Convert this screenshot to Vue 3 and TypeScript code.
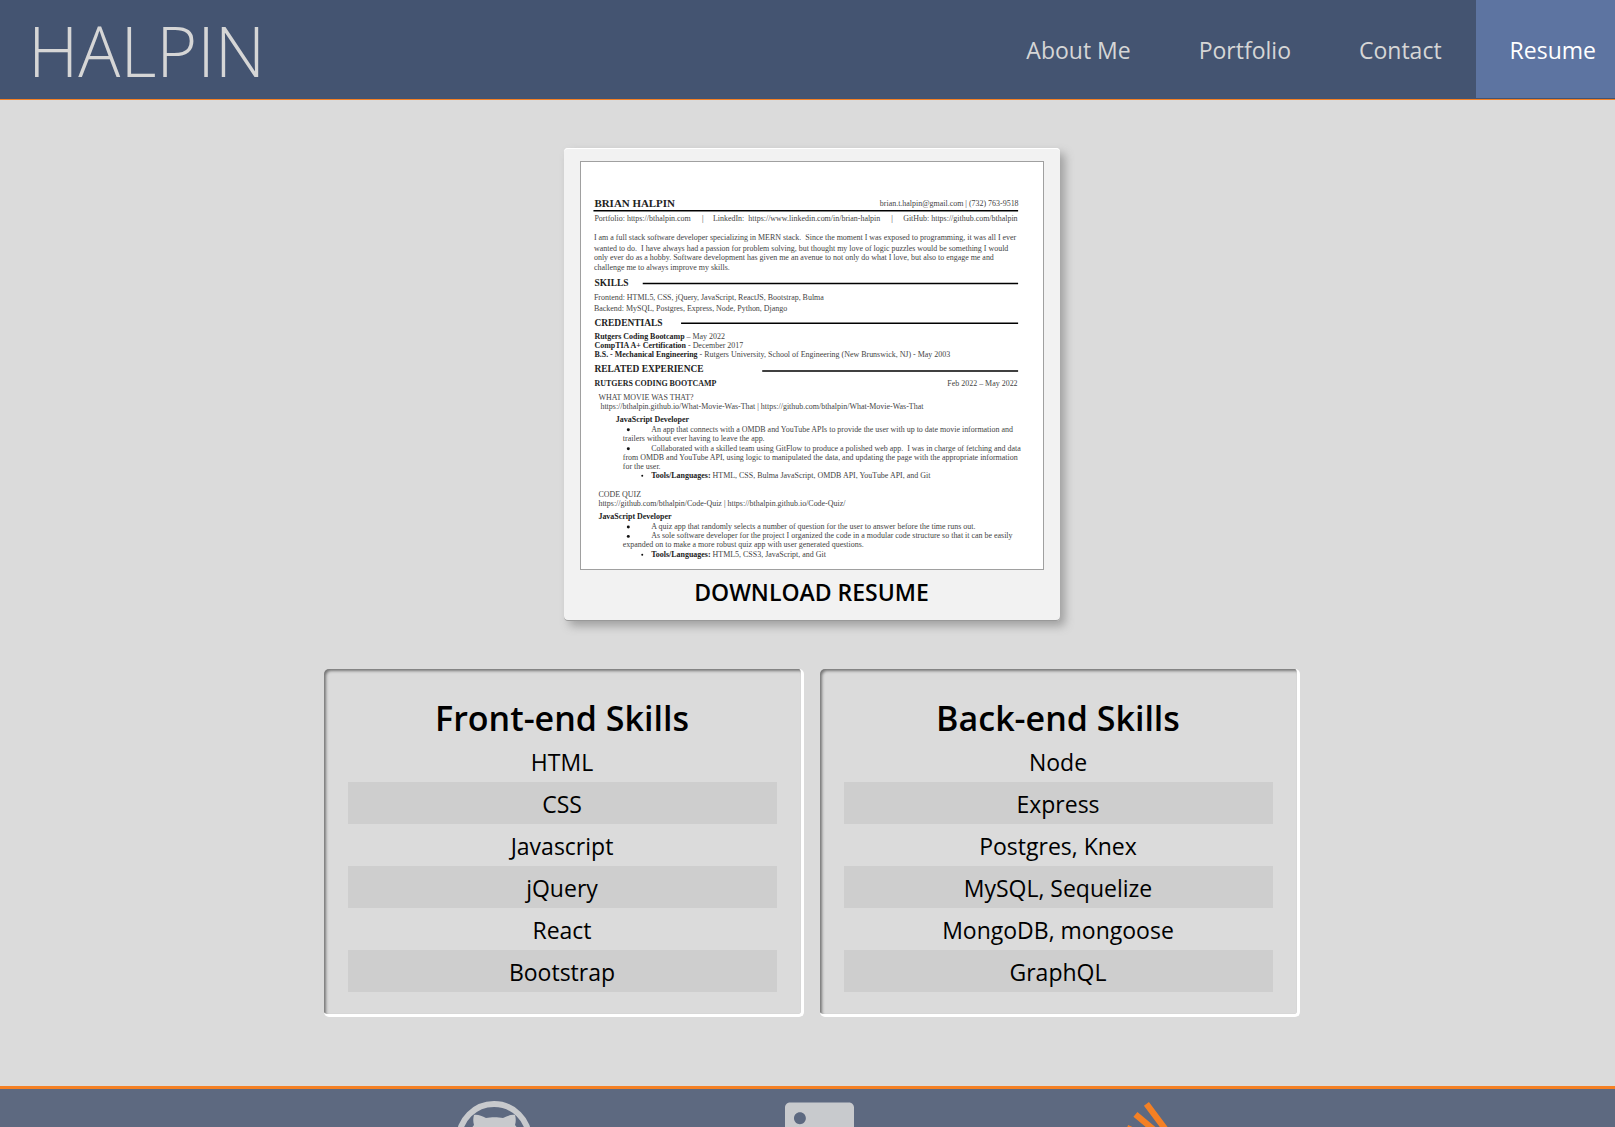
<script setup lang="ts">
interface NavItem {
  label: string
  active?: boolean
}
interface SkillGroup {
  title: string
  skills: string[]
}
interface DocLine {
  x: number
  y: number
  text: string
  lead?: string
  size?: number
  bold?: boolean
  end?: boolean
}

const nav: NavItem[] = [
  { label: 'About Me' },
  { label: 'Portfolio' },
  { label: 'Contact' },
  { label: 'Resume', active: true },
]

const groups: SkillGroup[] = [
  { title: 'Front-end Skills', skills: ['HTML', 'CSS', 'Javascript', 'jQuery', 'React', 'Bootstrap'] },
  {
    title: 'Back-end Skills',
    skills: ['Node', 'Express', 'Postgres, Knex', 'MySQL, Sequelize', 'MongoDB, mongoose', 'GraphQL'],
  },
]

// Text of the resume preview, in the units of its 928 x 818 view box
const lines: DocLine[] = [
  { x: 29, y: 91, text: 'BRIAN HALPIN', size: 22, bold: true },
  { x: 881, y: 90, text: 'brian.t.halpin@gmail.com | (732) 763-9518', end: true },
  { x: 29, y: 119, text: 'Portfolio: https://bthalpin.com' },
  { x: 245, y: 119, text: '|' },
  { x: 267, y: 119, text: 'LinkedIn:  https://www.linkedin.com/in/brian-halpin' },
  { x: 625, y: 119, text: '|' },
  { x: 879, y: 119, text: 'GitHub: https://github.com/bthalpin', end: true },
  { x: 28, y: 158, text: 'I am a full stack software developer specializing in MERN stack.  Since the moment I was exposed to programming, it was all I ever' },
  { x: 28, y: 179, text: 'wanted to do.  I have always had a passion for problem solving, but thought my love of logic puzzles would be something I would' },
  { x: 28, y: 198, text: 'only ever do as a hobby. Software development has given me an avenue to not only do what I love, but also to engage me and' },
  { x: 28, y: 218, text: 'challenge me to always improve my skills.' },
  { x: 29, y: 250, text: 'SKILLS', size: 19, bold: true },
  { x: 28, y: 279, text: 'Frontend: HTML5, CSS, jQuery, JavaScript, ReactJS, Bootstrap, Bulma' },
  { x: 28, y: 300, text: 'Backend: MySQL, Postgres, Express, Node, Python, Django' },
  { x: 29, y: 331, text: 'CREDENTIALS', size: 19, bold: true },
  { x: 29, y: 357, lead: 'Rutgers Coding Bootcamp', text: ' – May 2022' },
  { x: 29, y: 375, lead: 'CompTIA A+ Certification', text: ' - December 2017' },
  { x: 29, y: 393, lead: 'B.S. - Mechanical Engineering', text: ' - Rutgers University, School of Engineering (New Brunswick, NJ) - May 2003' },
  { x: 29, y: 423, text: 'RELATED EXPERIENCE', size: 19, bold: true },
  { x: 29, y: 451, text: 'RUTGERS CODING BOOTCAMP', bold: true },
  { x: 879, y: 451, text: 'Feb 2022 – May 2022', end: true },
  { x: 37, y: 479, text: 'WHAT MOVIE WAS THAT?' },
  { x: 41, y: 497, text: 'https://bthalpin.github.io/What-Movie-Was-That | https://github.com/bthalpin/What-Movie-Was-That' },
  { x: 72, y: 524, text: 'JavaScript Developer', bold: true },
  { x: 143, y: 543, text: 'An app that connects with a OMDB and YouTube APIs to provide the user with up to date movie information and' },
  { x: 86, y: 561, text: 'trailers without ever having to leave the app.' },
  { x: 143, y: 581, text: 'Collaborated with a skilled team using GitFlow to produce a polished web app.  I was in charge of fetching and data' },
  { x: 86, y: 599, text: 'from OMDB and YouTube API, using logic to manipulated the data, and updating the page with the appropriate information' },
  { x: 86, y: 617, text: 'for the user.' },
  { x: 143, y: 636, lead: 'Tools/Languages:', text: ' HTML, CSS, Bulma JavaScript, OMDB API, YouTube API, and Git' },
  { x: 37, y: 673, text: 'CODE QUIZ' },
  { x: 37, y: 691, text: 'https://github.com/bthalpin/Code-Quiz | https://bthalpin.github.io/Code-Quiz/' },
  { x: 37, y: 719, text: 'JavaScript Developer', bold: true },
  { x: 143, y: 738, text: 'A quiz app that randomly selects a number of question for the user to answer before the time runs out.' },
  { x: 143, y: 757, text: 'As sole software developer for the project I organized the code in a modular code structure so that it can be easily' },
  { x: 86, y: 775, text: 'expanded on to make a more robust quiz app with user generated questions.' },
  { x: 143, y: 795, lead: 'Tools/Languages:', text: ' HTML5, CSS3, JavaScript, and Git' },
]

const rules = [
  { x: 27, y: 99 },
  { x: 126, y: 245 },
  { x: 203, y: 325 },
  { x: 366, y: 421 },
]

const bullets = [
  { x: 97, y: 539, r: 3 },
  { x: 97, y: 577, r: 3 },
  { x: 125, y: 631, r: 2 },
  { x: 97, y: 734, r: 3 },
  { x: 97, y: 753, r: 3 },
  { x: 125, y: 790, r: 2 },
]
</script>

<template>
  <div class="page">
    <header class="header">
      <h1 class="brand">HALPIN</h1>
      <nav class="nav">
        <a v-for="item in nav" :key="item.label" href="#" class="nav-link" :class="{ active: item.active }">{{ item.label }}</a>
      </nav>
    </header>

    <main class="main">
      <a href="#" class="card">
        <svg class="preview" viewBox="2 1 928 818" role="img" aria-label="Resume preview">
          <line v-for="r in rules" :key="'r' + r.y" :x1="r.x" :x2="880" :y1="r.y" :y2="r.y" stroke="#000" stroke-width="3" />
          <circle v-for="b in bullets" :key="'b' + b.y" :cx="b.x" :cy="b.y" :r="b.r" fill="#111" />
          <text
            v-for="(l, i) in lines"
            :key="i"
            :x="l.x"
            :y="l.y"
            :font-size="l.size ?? 16"
            :font-weight="l.bold ? 700 : 400"
            :text-anchor="l.end ? 'end' : 'start'"
            :class="{ strong: l.bold }"
          ><tspan v-if="l.lead" class="strong" font-weight="700">{{ l.lead }}</tspan>{{ l.text }}</text>
        </svg>
        <span class="card-label">DOWNLOAD RESUME</span>
      </a>

      <div class="groups">
        <section v-for="g in groups" :key="g.title" class="group">
          <h2 class="group-title">{{ g.title }}</h2>
          <ul class="skills">
            <li v-for="s in g.skills" :key="s" class="skill">{{ s }}</li>
          </ul>
        </section>
      </div>
    </main>

    <footer class="footer">
      <div class="social">
        <a href="#" aria-label="GitHub" class="social-link">
          <svg width="76" height="80" viewBox="0 -4 76 80">
            <circle cx="38" cy="38" r="35" fill="none" stroke="currentColor" stroke-width="6" />
            <path
              fill="currentColor"
              d="M18 14c3-1 8 1 12 3 5-1 12-1 17 0 4-2 9-4 12-3 1 3 1 7 0 10 4 4 5 9 4 15-1 9-7 13-16 14 2 2 3 4 3 8v12H28v-9c-8 2-10-3-13-7 5-1 6 4 13 2 0-3 1-4 2-6-9-1-15-5-16-14-1-6 0-11 4-15-1-3-1-7 0-10z"
            />
          </svg>
        </a>
        <a href="#" aria-label="LinkedIn" class="social-link">
          <svg width="69" height="80" viewBox="0 0 448 512">
            <path
              fill="currentColor"
              d="M416 32H31.900C14.300 32 0 46.500 0 64.300v383.400C0 465.500 14.300 480 31.900 480H416c17.600 0 32-14.500 32-32.300V64.300c0-17.800-14.400-32.300-32-32.300zM135.400 416H69V202.200h66.500V416zm-38.500-243c-21.300 0-38.500-17.300-38.500-38.500S75.600 96 96.900 96c21.200 0 38.500 17.300 38.500 38.500 0 21.300-17.200 38.500-38.500 38.500zm282.100 243h-66.400V312c0-24.800-.5-56.700-34.500-56.700-34.600 0-39.900 27-39.900 54.900V416h-66.400V202.200h63.700v29.200h.9c8.900-16.800 30.600-34.500 62.900-34.500 67.200 0 79.700 44.300 79.700 101.900V416z"
            />
          </svg>
        </a>
        <a href="#" aria-label="Stack Overflow" class="social-link orange">
          <svg width="60" height="80" viewBox="0 0 384 512">
            <path
              fill="currentColor"
              d="M290.700 311L95 269.700 86.800 309l195.700 41zm51-87L188.200 95.700l-25.500 30.800 153.500 128.300zm-31.200 39.700L129.200 179l-16.700 36.500L293.700 300zM262 32l-32 24 119.300 160.300 32-24zm20.500 328h-200v39.700h200zm39.700 80H42.700V320h-40v160h359.500V320h-40z"
            />
          </svg>
        </a>
      </div>
    </footer>
  </div>
</template>

<style>
body {
  margin: 0;
  background: #dbdbdb;
}
</style>

<style scoped>
.page {
  height: 100vh;
  overflow-x: hidden;
  overflow-y: auto;
  scrollbar-width: none;
  background: #dbdbdb;
  color: #000;
  font-family: 'Open Sans', 'Noto Sans', sans-serif;
}
.header {
  display: flex;
  justify-content: space-between;
  height: 99px;
  padding-left: 28px;
  background: #445471;
  border-bottom: 1px solid #f48024;
}
.brand {
  margin: 0;
  color: #d6d6d6;
  font-size: 70px;
  font-weight: 300;
  line-height: 100px;
}
.nav {
  display: flex;
  height: 98px;
}
.nav-link {
  padding: 0 34px;
  color: #d6d6d6;
  font-size: 23px;
  line-height: 100px;
  text-decoration: none;
}
.nav-link.active {
  padding-right: 19px;
  background: #5d74a1;
  color: #fff;
}
.main {
  display: flex;
  flex-direction: column;
  align-items: center;
  gap: 48px;
  padding: 48px 0 69px 8px;
}
.card {
  box-sizing: border-box;
  display: flex;
  flex-direction: column;
  align-items: center;
  width: 496px;
  padding: 13px 16px 12px;
  border-radius: 4px;
  background: #f2f2f2;
  box-shadow:
    5px 5px 10px #a0a0a0,
    inset 0 1px 0 #fff,
    inset 0 -1px 0 #999;
  color: #000;
  text-decoration: none;
}
.preview {
  box-sizing: border-box;
  width: 100%;
  border: 1px solid #a0a0a0;
  background: #fff;
  font-family: 'Liberation Serif', 'Times New Roman', serif;
}
.preview text {
  fill: #444;
  white-space: pre;
}
.preview .strong {
  fill: #222;
}
.card-label {
  margin-top: 6px;
  font-size: 23px;
  font-weight: 600;
  line-height: 33px;
}
.groups {
  display: flex;
  justify-content: center;
  gap: 16px;
}
.group {
  box-sizing: border-box;
  width: 480px;
  padding: 27px 24px 22px;
  border: solid #fff;
  border-width: 0 3px 3px 0;
  border-radius: 5px;
  box-shadow: inset 2px 2px 3px #777;
  text-align: center;
}
.group-title {
  margin: 0;
  font-size: 34px;
  font-weight: 600;
  line-height: 44px;
}
.skills {
  margin: 0;
  padding: 0;
  list-style: none;
}
.skill {
  padding-top: 2px;
  font-size: 23px;
  line-height: 40px;
}
.skill:nth-child(even) {
  background: #cecece;
}
.footer {
  padding: 8px 0 24px 8px;
  border-top: 3px solid #f48024;
  background: #5d6980;
}
.social {
  display: flex;
  justify-content: space-between;
  max-width: 712px;
  margin: 0 auto;
}
.social-link {
  display: block;
  color: #c8cacd;
}
.social-link svg {
  display: block;
}
.social-link.orange {
  color: #f48024;
}
</style>
